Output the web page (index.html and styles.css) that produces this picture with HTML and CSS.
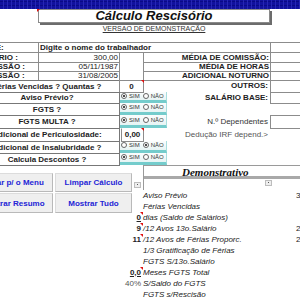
FILE: index.html
```html
<!DOCTYPE html>
<html lang="pt-BR">
  <head>
    <meta charset="UTF-8" />
    <title>Cálculo Rescisório</title>
    <link rel="stylesheet" href="styles.css">
  </head>
  <body>
    <div class="bar"></div>

    <div class="sheet">
      <header class="head">
        <h1 class="title note-l">Cálculo Rescisório</h1>
        <p class="demo">VERSAO DE DEMONSTRAÇÃO</p>
      </header>

      <div class="form">
        <!-- dados do trabalhador -->
        <div class="cell key">NOME:</div>
        <div class="cell name"><b>Digite o nome do trabalhador</b></div>
        <div class="cell"></div>

        <div class="cell key">SALÁRIO :</div>
        <div class="cell num">300,00</div>
        <div class="cell tall"></div>
        <div class="cell rkey">MÉDIA DE COMISSÃO:</div>
        <div class="cell"></div>

        <div class="cell key">ADMISSÃO :</div>
        <div class="cell num">05/11/1987</div>
        <div class="cell rkey">MÉDIA DE HORAS</div>
        <div class="cell"></div>

        <div class="cell key">DEMISSÃO :</div>
        <div class="cell num">31/08/2005</div>
        <div class="cell rkey">ADICIONAL NOTURNO</div>
        <div class="cell"></div>

        <!-- perguntas -->
        <div class="cell ask">Férias Vencidas ? Quantas ?</div>
        <div class="cell qty note">0</div>
        <div></div>
        <div class="side bold">OUTROS:</div>
        <div class="cell"></div>

        <div class="cell ask">Aviso Prévio?</div>
        <div class="radio"><span class="opt"><i class="rb on"></i>SIM</span><span class="opt"><i class="rb"></i>NÃO</span></div>
        <div class="side bold">SALÁRIO BASE:</div>
        <div class="cell"></div>

        <div class="cell ask">FGTS ?</div>
        <div class="radio"><span class="opt"><i class="rb on"></i>SIM</span><span class="opt"><i class="rb"></i>NÃO</span></div>
        <div></div>
        <div></div>

        <div class="cell ask">FGTS MULTA ?</div>
        <div class="radio"><span class="opt"><i class="rb on"></i>SIM</span><span class="opt"><i class="rb"></i>NÃO</span></div>
        <div class="side">N.º Dependentes</div>
        <div class="cell"></div>

        <div class="cell ask">Adicional de Periculosidade:</div>
        <div class="cell qty money note">0,00</div>
        <div></div>
        <div class="side muted">Dedução IRF depend.&gt;</div>
        <div></div>

        <div class="cell ask">Adicional de Insalubridade ?</div>
        <div class="radio"><span class="opt"><i class="rb"></i>SIM</span><span class="opt"><i class="rb on"></i>NÃO</span></div>
        <div></div>
        <div></div>

        <div class="cell ask">Calcula Descontos ?</div>
        <div class="radio"><span class="opt"><i class="rb on"></i>SIM</span><span class="opt"><i class="rb"></i>NÃO</span></div>
        <div></div>
        <div></div>
      </div>

      <div class="lower">
        <div class="actions">
          <div class="btns">
            <button class="btn">Voltar p/ o Menu</button>
            <button class="btn">Limpar Cálculo</button>
            <button class="btn">Mostrar Resumo</button>
            <button class="btn">Mostrar Tudo</button>
          </div>
          <span class="mini"></span>
        </div>

        <div class="demo-head">
          <h2>Demonstrativo</h2>
          <span class="mini"></span>
        </div>

        <div class="l">Aviso Prévio</div><div class="v">30,00</div>
        <div class="l">Férias Vencidas</div><div class="v"></div>
        <div class="n b u note">0</div><div class="l">dias (Saldo de Salários)</div><div class="v"></div>
        <div class="n b note">9</div><div class="l">/12 Avos 13o.Salário</div><div class="v">225,00</div>
        <div class="n b note">11</div><div class="l">/12 Avos de Férias Proporc.</div><div class="v">275,00</div>
        <div class="l">1/3 Gratificação de Férias</div><div class="v"></div>
        <div class="l">FGTS S/13o.Salário</div><div class="v"></div>
        <div class="n b u note">0,0</div><div class="l">Meses FGTS Total</div><div class="v"></div>
        <div class="n pct">40%</div><div class="l">S/Saldo do FGTS</div><div class="v"></div>
        <div class="l">FGTS s/Rescisão</div><div class="v"></div>
      </div>
    </div>
  </body>
</html>
```

FILE: styles.css
```css
* {
  box-sizing: border-box;
}

body {
  margin: 0;
  overflow: hidden;
  background: #fff;
  color: #222;
  font: 8px/1 "Liberation Sans", Arial, sans-serif;
}

.bar {
  height: 9px;
  background-color: #11119e;
  background-image: repeating-linear-gradient(90deg, transparent 0 3px, #2626b4 3px 4px),
    repeating-linear-gradient(0deg, transparent 0 3px, #0a0a86 3px 4px);
}

/* the sheet is scrolled a bit to the right, like the original window */
.sheet {
  margin-left: -26px;
  width: 362px;
}

.head {
  margin-left: 64px;
  width: 232px;
}

.title {
  position: relative;
  margin: 0;
  height: 14px;
  border: 1px solid #8a8a8a;
  box-shadow: 2px 2px 0 #6c6c6c;
  font: italic bold 13px/12px "Liberation Sans", Arial, sans-serif;
  color: #111;
  text-align: center;
}

.demo {
  margin: 2px 0 0;
  font-size: 7px;
  line-height: 7px;
  text-align: center;
  text-decoration: underline;
  color: #333;
}

/* form grid */
.form {
  display: grid;
  grid-template-columns: 64px 81px 24px 27px 100px 30px;
  grid-template-rows: 10px 10px 9px 9px 12px 11px 12px 13px 13px 12px 12px;
  margin-top: 10px;
}

.cell {
  position: relative;
  display: flex;
  align-items: center;
  margin: 0 -1px -1px 0;
  border: 1px solid #8c8c8c;
  background: #fff;
  white-space: nowrap;
}

.key {
  grid-column: 1;
  padding-left: 2px;
  font-weight: bold;
}

.name {
  grid-column: 2 / 6;
  padding-left: 1px;
}

.name b {
  font-weight: 700;
  font-size: 8px;
}

.num {
  grid-column: 2;
  justify-content: flex-end;
  padding-right: 1px;
}

.tall {
  grid-column: 3;
  grid-row: 2 / 5;
}

.rkey {
  grid-column: 4 / 6;
  justify-content: flex-end;
  padding-right: 1px;
  font-weight: bold;
}

.ask {
  grid-column: 1 / 3;
  justify-content: center;
  font-weight: bold;
  border-color: #777;
}

.qty {
  justify-content: center;
  font-weight: bold;
}

.money {
  margin-left: 2px;
  border-top-color: #fff;
}

.side {
  display: flex;
  align-items: center;
  justify-content: flex-end;
  padding-right: 2px;
  white-space: nowrap;
  color: #333;
}

.side.bold {
  font-weight: bold;
  color: #222;
}

.muted {
  color: #555;
}

.qty.note + div,
.money + div {
  grid-column: 4;
}

/* option groups */
.radio {
  grid-column: 3 / 5;
  display: flex;
  align-items: center;
  gap: 3px;
  width: 48px;
  padding: 0 0 1px 2px;
  background: linear-gradient(#fbfdfd, #e6f4f4);
  border-bottom: 3px solid #74cccc;
  border-right: 1px solid #a9dede;
  font-size: 6px;
  color: #333;
}

.opt {
  display: flex;
  align-items: center;
  gap: 2px;
}

.rb {
  display: inline-flex;
  align-items: center;
  justify-content: center;
  width: 6px;
  height: 6px;
  border: 1px solid #666;
  border-radius: 50%;
  background: #fff;
}

.rb.on::after {
  content: "";
  width: 2px;
  height: 2px;
  border-radius: 50%;
  background: #111;
}

/* comment markers */
.note::after,
.note-l::before {
  content: "";
  position: absolute;
  top: -1px;
  right: -1px;
  border-top: 3px solid #e01010;
  border-left: 3px solid transparent;
}

.note-l::before {
  right: auto;
  left: -2px;
  top: -1px;
  border-left: none;
  border-right: 3px solid transparent;
}

/* lower part */
.lower {
  display: grid;
  grid-template-columns: 167px 2px 153px 40px;
  grid-template-rows: 25px repeat(10, 11px);
}

.actions {
  grid-column: 1;
  grid-row: 1 / 4;
  display: flex;
  align-items: flex-start;
}

.btns {
  display: grid;
  grid-template-columns: 80px 77px;
  grid-template-rows: 19px 20px;
  gap: 1px 2px;
  margin: 8px 0 0 -1px;
}

.btn {
  padding: 0;
  background: #efefef;
  border: 1px solid #dcdcdc;
  border-right-color: #b9b9b9;
  border-bottom-color: #b9b9b9;
  color: #2424d6;
  font: bold 8px "Liberation Sans", Arial, sans-serif;
  white-space: nowrap;
}

.mini {
  position: relative;
  width: 7px;
  height: 6px;
  margin: 17px 0 0 2px;
  background: #eee;
  border: 1px solid #bdbdbd;
}

.mini::after {
  content: "";
  position: absolute;
  left: 2px;
  top: 1px;
  width: 1px;
  height: 1px;
  background: #555;
}

.demo-head {
  grid-column: 3 / 5;
  grid-row: 1;
  display: flex;
  flex-direction: column;
  border-top: 1px solid #9a9a9a;
  border-left: 1px solid #9a9a9a;
}

.demo-head h2 {
  margin: 0;
  height: 13px;
  padding-left: 38px;
  border-bottom: 3px solid #a9a9a9;
  font: italic bold 11px/13px "Liberation Serif", "Times New Roman", serif;
  color: #111;
}

.demo-head .mini {
  margin: 1px 0 0 121px;
}

.l {
  grid-column: 3;
  display: flex;
  align-items: center;
  font-style: italic;
  color: #222;
  white-space: nowrap;
}

.v {
  grid-column: 4;
  display: flex;
  align-items: center;
  color: #222;
}

.n {
  position: relative;
  grid-column: 1;
  display: flex;
  align-items: center;
  justify-content: flex-end;
}

.n.note::after {
  top: 0;
  right: -2px;
}

.b {
  font-weight: bold;
}

.u {
  text-decoration: underline;
}

.pct {
  color: #555;
}
```
